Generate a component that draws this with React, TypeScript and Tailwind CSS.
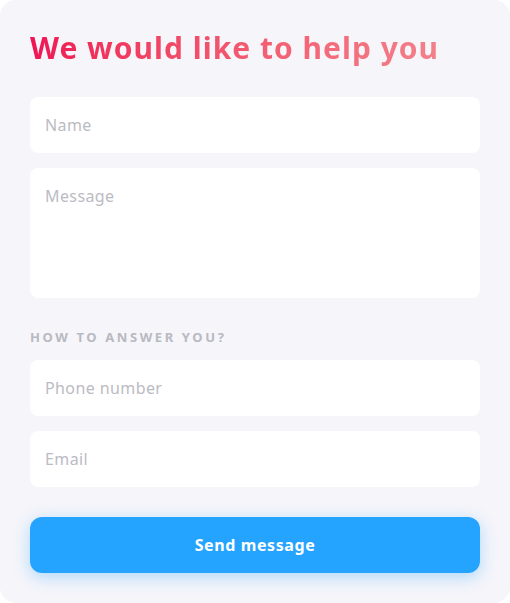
import React from 'react';

const fieldClass =
  'w-full h-[56px] rounded-lg bg-white px-[15px] text-[16px] tracking-[0.4px] text-gray-700 placeholder:text-[#bbbbc3] outline-none';

const App: React.FC = () => {
  return (
    <div className="w-[510px] h-[603px] bg-white" style={{ fontFamily: '"Noto Sans", "Open Sans", sans-serif' }}>
      <div className="h-full rounded-2xl bg-[#f5f5fa] px-[30px] pt-[28px]">
        <h1 className="text-[30px] leading-[40px] font-bold tracking-[1px] bg-gradient-to-r from-[#ee1254] to-[#f3808a] bg-clip-text text-transparent w-fit">
          We would like to help you
        </h1>

        <form className="mt-[29px] flex flex-col" onSubmit={(e) => e.preventDefault()}>
          <input className={fieldClass} placeholder="Name" />
          <textarea
            className="mt-[15px] w-full h-[130px] resize-none rounded-lg bg-white px-[15px] py-[16px] text-[16px] leading-[24px] tracking-[0.4px] text-gray-700 placeholder:text-[#bbbbc3] outline-none"
            placeholder="Message"
          />

          <div className="mt-[30px] text-[13px] leading-[18px] font-bold tracking-[2.6px] text-[#b9b9c1] uppercase">
            How to answer you?
          </div>

          <input className={`${fieldClass} mt-[14px]`} placeholder="Phone number" />
          <input className={`${fieldClass} mt-[15px]`} placeholder="Email" />

          <button
            type="submit"
            className="mt-[30px] h-[56px] w-full rounded-xl bg-[#25a4ff] text-white text-[16px] font-bold tracking-[0.6px] shadow-[0_4px_16px_rgba(37,164,255,0.35)]"
          >
            Send message
          </button>
        </form>
      </div>
    </div>
  );
};

export default App;
